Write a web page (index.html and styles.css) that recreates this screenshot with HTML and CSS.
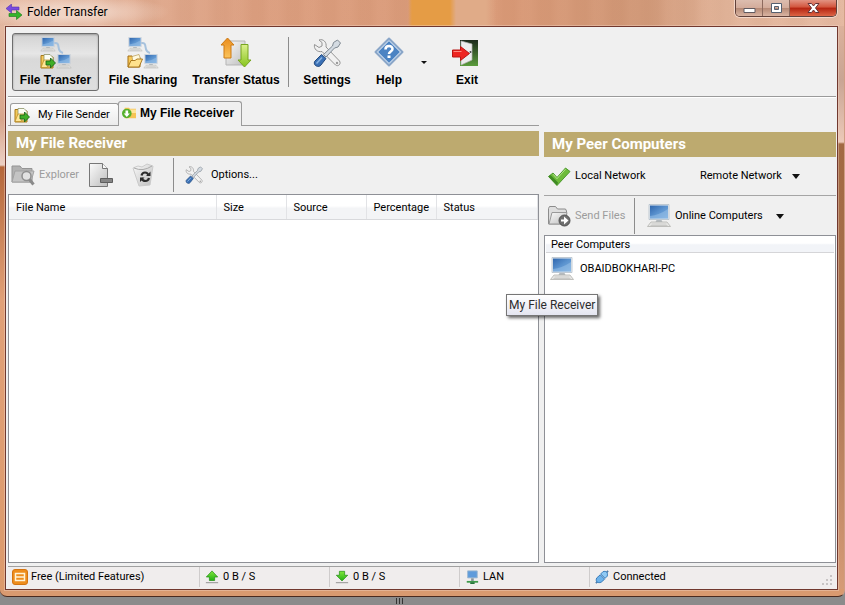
FILE: index.html
```html
<!DOCTYPE html>
<html lang="en">
<head>
<meta charset="utf-8">
<title>Folder Transfer</title>
<link rel="stylesheet" href="styles.css">
</head>
<body>
<svg class="defs" width="0" height="0" aria-hidden="true">
  <defs>
    <linearGradient id="g-screen" x1="0" y1="0" x2="1" y2="1"><stop offset="0" stop-color="#2f66ad"/><stop offset=".5" stop-color="#5b93cf"/><stop offset="1" stop-color="#7fb0e0"/></linearGradient>
    <linearGradient id="g-green" x1="0" y1="0" x2="0" y2="1"><stop offset="0" stop-color="#7fe63c"/><stop offset="1" stop-color="#23b012"/></linearGradient>
    <linearGradient id="g-lime" x1="0" y1="0" x2="0" y2="1"><stop offset="0" stop-color="#dcf08e"/><stop offset="1" stop-color="#86c41c"/></linearGradient>
    <linearGradient id="g-orange" x1="0" y1="0" x2="0" y2="1"><stop offset="0" stop-color="#ea8c1c"/><stop offset="1" stop-color="#fbc45c"/></linearGradient>
    <linearGradient id="g-grey" x1="0" y1="0" x2="1" y2="1"><stop offset="0" stop-color="#fbfbfb"/><stop offset="1" stop-color="#bdbdbd"/></linearGradient>
    <linearGradient id="g-door" x1="0" y1="0" x2="0" y2="1"><stop offset="0" stop-color="#1c2a1c"/><stop offset="1" stop-color="#5b9c3c"/></linearGradient>
    <symbol id="pc" viewBox="0 0 24 24">
      <path d="M2 .5h20v15H2z" fill="#e6ebf0" stroke="#b3bfca" stroke-width=".8"/>
      <path d="M3 1.500h18v13H3z" fill="url(#g-screen)"/>
      <path d="M3 12Q12 11 21 5v9.500H3z" fill="#9cc4ea" opacity=".5"/>
      <path d="M9.500 16h5l1 2h-7z" fill="#b4babf"/>
      <path d="M4 18h16l3.500 4.500H.5z" fill="#e8e8e6" stroke="#b2b2af" stroke-width=".8"/>
      <path d="M4.500 20h15M3.500 21.500h17" stroke="#bdbdba" stroke-width=".7"/>
    </symbol>
    <symbol id="send" viewBox="0 0 16 16">
      <path d="M1 2.500h4l1 1.500h7v11H1z" fill="#f5c95a" stroke="#a87a18"/>
      <path d="M4 1.500h6l3 3V13H4z" fill="#fbfdf4" stroke="#8d9468" stroke-width=".8"/>
      <path d="M1 14.500L4 7h6l-3 7.500z" fill="#ffe695" stroke="#b98a22" stroke-width=".7"/>
      <path d="M6 8h4.500V5l5 5-5 5v-3H6z" fill="#3fae27" stroke="#155f11" stroke-width=".8"/>
    </symbol>
    <symbol id="folder" viewBox="0 0 16 16">
      <path d="M1 3h4l1.500 1.500H13V14H1z" fill="#f8c957" stroke="#a36f14"/>
      <path d="M5 3.500l7-2 2 6-8 2z" fill="#fff9df" stroke="#b89a50" stroke-width=".7"/>
      <path d="M1 14l3-6.500h4L10 6h5.500L12 14z" fill="#ffe28c" stroke="#a36f14" stroke-width=".9"/>
    </symbol>
    <symbol id="tools" viewBox="0 0 32 32">
      <path d="M3.500 7.500l4.500 3 3-1.500V5.500L8 3c4-1.500 8 2 7 7L28.500 24c2 3-1.500 6-4 4L11 14.500C6.500 15.500 2.500 12 3.500 7.500z" fill="#f1f1f1" stroke="#949494"/>
      <circle cx="26" cy="26" r="1.200" fill="#9a9a9a"/>
      <path d="M21.500 9l1-3.500L26.500 3l3 3-2.500 4-3.500 1-8.500 9-2.500-2.500z" fill="#d4dbe2" stroke="#7f8992"/>
      <path d="M10.500 17.500l4.500 4-5 6.500c-2 3-8 1-6.500-3.500z" fill="#3a70b5" stroke="#244a7d"/>
      <path d="M11 20.500l-5.500 6" stroke="#8ab4e2" stroke-width="1.500"/>
    </symbol>
    <symbol id="up" viewBox="0 0 16 16"><path d="M8 1l6.500 7H11v4H5V8H1.500z" fill="url(#g-green)" stroke="#218c14" stroke-width=".8"/><path d="M1 14.500h14" stroke="#868686"/></symbol>
    <symbol id="down" viewBox="0 0 16 16"><path d="M8 12.500L14.500 6H11V1.500H5V6H1.500z" fill="url(#g-green)" stroke="#218c14" stroke-width=".8"/><path d="M1 14.500h14" stroke="#868686"/></symbol>
  </defs>
</svg>

<div class="window">
  <header class="titlebar">
    <svg class="i16" viewBox="0 0 16 16" aria-hidden="true"><path d="M0 4.500L5.500 0v3H13v3H5.500v3z" fill="#7a4be0" stroke="#5632ad" stroke-width=".6"/><path d="M16 11l-5.500-4.500v3H3v3h7.500v3z" fill="#35b52a" stroke="#16771a" stroke-width=".6"/></svg>
    <h1>Folder Transfer</h1>
    <div class="caption">
      <button type="button" class="cap" aria-label="Minimize"><svg width="13" height="12" viewBox="0 0 13 12"><path d="M1 6.500h11v4H1z" fill="#fff" stroke="#605a60"/></svg></button>
      <button type="button" class="cap" aria-label="Maximize"><svg width="13" height="12" viewBox="0 0 13 12"><path d="M1.500 1.500h10v9h-10zM4.500 4.500v3h4v-3z" fill="#fff" fill-rule="evenodd" stroke="#56606f"/></svg></button>
      <button type="button" class="cap close" aria-label="Close"><svg width="13" height="12" viewBox="0 0 13 12"><path d="M1 1.500h3.500l2 2.500 2-2.500H12L8.500 6l3.500 4.500H8.500l-2-2.500-2 2.500H1L4.500 6z" fill="#fff" stroke="#643237"/></svg></button>
    </div>
  </header>

  <main class="client">
    <nav class="toolbar" aria-label="Main">
      <button type="button" class="tool pressed">
        <svg class="i32" viewBox="0 0 32 32" aria-hidden="true"><path d="M14 6c8-1 1 8 9 10" fill="none" stroke="#a7c2dd" stroke-width="2"/><use href="#pc" width="16" height="15"/><use href="#pc" x="16" y="17" width="16" height="15"/><use href="#send" x="0" y="16" width="16" height="16"/></svg>
        <span>File Transfer</span></button>
      <button type="button" class="tool">
        <svg class="i32" viewBox="0 0 32 32" aria-hidden="true"><path d="M14 6c8-1 1 8 9 10" fill="none" stroke="#a7c2dd" stroke-width="2"/><use href="#pc" width="16" height="15"/><use href="#pc" x="16" y="17" width="16" height="15"/><use href="#folder" x="0" y="16" width="16" height="16"/></svg>
        <span>File Sharing</span></button>
      <button type="button" class="tool wide">
        <svg class="i32" viewBox="0 0 32 32" aria-hidden="true"><path d="M6 4h19v24H6z" fill="url(#g-grey)" stroke="#b5b5b5"/><path d="M7.500 1l6.500 7h-3v13h-7V8H1z" fill="url(#g-orange)" stroke="#cd7a14"/><path d="M24.500 30L18 23h3V7.500h7V23h3z" fill="url(#g-lime)" stroke="#76a51f"/></svg>
        <span>Transfer Status</span></button>
      <span class="sep"></span>
      <button type="button" class="tool mid"><svg class="i32" viewBox="0 0 32 32" aria-hidden="true"><use href="#tools" width="32" height="32"/></svg><span>Settings</span></button>
      <button type="button" class="tool slim">
        <svg class="i32" viewBox="0 0 32 32" aria-hidden="true"><path d="M16 1.500L29.500 15 16 28.500 2.500 15z" fill="#4b83c3" stroke="#8aa6c8" stroke-width="2" stroke-linejoin="round"/><path d="M16 3.500L27.500 15 16 26.500 4.500 15z" fill="none" stroke="#fff"/><path d="M12.500 12.500c0-4.500 7-4.500 7-.5 0 2.500-3.500 2.500-3.500 5" fill="none" stroke="#fff" stroke-width="2.600"/><path d="M14.500 18.500h3v2.500h-3z" fill="#fff"/></svg>
        <span>Help</span></button>
      <button type="button" class="more" aria-label="More help"><i class="caret small"></i></button>
      <button type="button" class="tool mid">
        <svg class="i32" viewBox="0 0 32 32" aria-hidden="true"><path d="M9 3h18v26H9z" fill="url(#g-door)"/><path d="M10 4l11 3v16l-11 5z" fill="#ececec" stroke="#b2b2b2" stroke-width=".7"/><circle cx="19.500" cy="15" r="1" fill="#444"/><path d="M1.500 13h8V9.500l9 7-9 7V20h-8z" fill="#ee2420" stroke="#b81512"/><path d="M2.500 14.500h8" stroke="#ff8a80"/></svg>
        <span>Exit</span></button>
    </nav>

    <div class="panes">
      <section class="left">
        <div class="tabs" role="tablist">
          <button type="button" class="tab" role="tab" aria-selected="false"><svg class="i16" aria-hidden="true"><use href="#send"/></svg>My File Sender</button>
          <button type="button" class="tab active" role="tab" aria-selected="true"><svg class="i14" viewBox="0 0 16 16" aria-hidden="true"><path d="M3 2h5l1 1h7v11H3z" fill="#f6c455"/><path d="M4 4h12v4H4z" fill="#ffe59a"/><circle cx="5.500" cy="8.500" r="5.500" fill="#56b02c"/><path d="M4 5h3v3.500h2l-3.500 4L2 8.500h2z" fill="#fff"/></svg>My File Receiver</button>
        </div>
        <h2>My File Receiver</h2>
        <div class="bar">
          <button type="button" class="act" disabled><svg class="i24" viewBox="0 0 24 24" aria-hidden="true"><path d="M1 3h8l2 2.500h10V19H1z" fill="#b2b2b2" stroke="#949494"/><path d="M4 8h19l-3 11H1z" fill="#c4c4c4" stroke="#a2a2a2"/><circle cx="15.500" cy="13" r="4.500" fill="#e2e2e2" stroke="#8f8f8f" stroke-width="1.500"/><path d="M18.500 16.500l4 5" stroke="#8a8a8a" stroke-width="3"/></svg>Explorer</button>
          <button type="button" class="act icon" aria-label="Remove"><svg class="i24" viewBox="0 0 24 24" aria-hidden="true"><path d="M.5.500h13l5 5v18H.5z" fill="url(#g-grey)" stroke="#777"/><path d="M13.500.500v5h5" fill="#f8f8f8" stroke="#777"/><path d="M11.500 15.500h12v4h-12z" fill="#858585" stroke="#5e5e5e"/></svg></button>
          <button type="button" class="act icon" aria-label="Clear"><svg class="i24" viewBox="0 0 24 24" aria-hidden="true"><path d="M2 5l5-2 4 1 5-3 6 2-3 19-11 1z" fill="url(#g-grey)" stroke="#cbcbcb"/><path d="M3 5q9 4 18-2" fill="none" stroke="#a9a9a9"/><path d="M10.500 12.500c1-4 6-4 7 0M18 15c-1 4-6 4-7.500 0" fill="none" stroke="#2d2d2d" stroke-width="2.200"/><path d="M19.500 8.500v4.500H15zM9 19V14.500h4.500z" fill="#2d2d2d"/></svg></button>
          <span class="sep"></span>
          <button type="button" class="act"><svg class="i20" aria-hidden="true"><use href="#tools"/></svg>Options...</button>
        </div>
        <div class="sheet">
          <table>
            <colgroup><col class="c-name"><col class="c-size"><col class="c-source"><col class="c-size"><col></colgroup>
            <thead><tr><th scope="col">File Name</th><th scope="col">Size</th><th scope="col">Source</th><th scope="col">Percentage</th><th scope="col">Status</th></tr></thead>
          </table>
        </div>
      </section>

      <section class="right">
        <h2>My Peer Computers</h2>
        <div class="bar network">
          <button type="button" class="act local"><svg class="i24" viewBox="0 0 24 24" aria-hidden="true"><path d="M1.500 12.500L6 9l4 4.500L18.500 4 23 7.500 10 21.500z" fill="#6dbb3a" stroke="#4c9a2c"/><path d="M1.500 12.500l8.500 9 1-3-7.500-7.500z" fill="#3f8a24"/><path d="M6 10.200l4 4.500 8.500-9.500" fill="none" stroke="#b4e48c"/></svg>Local Network</button>
          <button type="button" class="act remote">Remote Network<i class="caret"></i></button>
        </div>
        <div class="bar">
          <button type="button" class="act send" disabled><svg class="i24" viewBox="0 0 24 24" aria-hidden="true"><path d="M1.500 20V4.500l1-2h6l2 2.500h8l1 2V20z" fill="#dedede" stroke="#8c8c8c"/><path d="M2 20L5 8.500h15L18 20z" fill="url(#g-grey)" stroke="#999"/><circle cx="17.500" cy="16.500" r="5.500" fill="#6f6f6f" stroke="#4f4f4f"/><path d="M14 15.500h3v-3l4.500 4-4.500 4v-3h-3z" fill="#fff"/></svg>Send Files</button>
          <span class="sep"></span>
          <button type="button" class="act online"><svg class="i24" aria-hidden="true"><use href="#pc"/></svg>Online Computers<i class="caret"></i></button>
        </div>
        <div class="sheet peers">
          <h3>Peer Computers</h3>
          <ul><li><svg class="i24" aria-hidden="true"><use href="#pc"/></svg>OBAIDBOKHARI-PC</li></ul>
          <div class="tip" role="tooltip">My File Receiver</div>
        </div>
      </section>
    </div>

    <footer class="status">
      <span class="cell first"><svg class="i16" viewBox="0 0 16 16" aria-hidden="true"><rect x=".5" y=".5" width="15" height="15" rx="2.500" fill="#ee8d1c" stroke="#d47410"/><path d="M3.500 4.500h9v7h-9zM3.500 8h9" fill="none" stroke="#fff3d6" stroke-width="1.500"/></svg>Free (Limited Features)</span>
      <span class="cell"><svg class="i14" aria-hidden="true"><use href="#up"/></svg>0 B / S</span>
      <span class="cell"><svg class="i14" aria-hidden="true"><use href="#down"/></svg>0 B / S</span>
      <span class="cell"><svg class="i14" viewBox="0 0 16 16" aria-hidden="true"><path d="M3 1h11v8H3z" fill="#5f9bdb" stroke="#9db7d0"/><path d="M7 9.500h3V13H7z" fill="#8a949c"/><path d="M2 13.500h13" stroke="#3d9a4a" stroke-width="2"/><path d="M6 15h5" stroke="#26753a" stroke-width="2"/></svg>LAN</span>
      <span class="cell last"><svg class="i14" viewBox="0 0 16 16" aria-hidden="true"><path d="M1 15l3-3M12 4l3-3" stroke="#4e7aa8" stroke-width="2"/><path d="M2 9l4-3.500 5 5-4 3.500c-4 1.500-7-1-5-5z" fill="#6db2ea" stroke="#2c72b4"/><path d="M6.500 4.500L9 2c4-1.500 6 1 5 5l-2.500 2.500z" fill="#8fc9f4" stroke="#2c72b4"/></svg>Connected<svg class="grip" viewBox="0 0 12 12" aria-hidden="true"><path d="M8 1h2v2H8zM4 5h2v2H4zM8 5h2v2H8zM0 9h2v2H0zM4 9h2v2H4zM8 9h2v2H8z" fill="#c8c4c4"/></svg></span>
    </footer>
  </main>
</div>
<div class="desk"><i></i><i></i><i></i></div>
</body>
</html>
```
FILE: styles.css
```css
* { box-sizing: border-box; }

body {
  margin: 0;
  min-height: 100vh;
  display: flex;
  flex-direction: column;
  background: #8b8b8b;
  font: 11px/14px Roboto, "Liberation Sans", Arial, sans-serif;
  color: #000;
}

button {
  font: inherit;
  color: inherit;
  margin: 0;
  padding: 0;
  border: 0;
  background: none;
}

h1, h2, h3, ul { margin: 0; padding: 0; font: inherit; }
svg { display: block; flex: none; }
.defs { position: absolute; }
.i14 { width: 14px; height: 14px; }
.i16 { width: 16px; height: 16px; }
.i20 { width: 20px; height: 20px; }
.i24 { width: 24px; height: 24px; }
.i32 { width: 32px; height: 32px; }

.window {
  flex: 1;
  display: flex;
  flex-direction: column;
  padding: 0 6px 6px 5px;
  border-bottom: 1px solid #4a2b20;
  border-right: 1px solid #cf9e84;
  border-radius: 0 0 7px 7px;
  background:
    linear-gradient(#d99a70, #d99a70) bottom / 100% 7px no-repeat,
    linear-gradient(#e6bda6, #d8a58b 120px, #ecd0c4 165px, #b5673a 167px, #e0a078 300px, #dc9a6c) left / 6px 100% no-repeat,
    linear-gradient(#e5b79f, #c9a594 80px, #ecc9b8 142px, #a26942 144px, #a87350 360px, #d79c78) right / 6px 100% no-repeat,
    #d99c7c;
}

.titlebar {
  display: flex;
  align-items: flex-start;
  height: 26px;
  padding: 4px 0 0 6px;
  margin: 0 -6px 0 -5px;
  background:
    radial-gradient(ellipse 100px 18px at 70px 12px, #f4dccfcc 30%, #f4dccf00),
    linear-gradient(90deg, #e59c4500 408px, #e59c45 412px 450px, #e0ab88 456px 486px, #d9a17f00 496px),
    repeating-linear-gradient(90deg, #c58a6b22 0 10px, #e0aa8f22 18px 26px, #c58a6b22 36px),
    linear-gradient(90deg, #e6bca6, #dc9f80 30%, #d99976 60%, #cf9776 76%, #e3b79d 86%, #e7bea7);
}
.titlebar h1 {
  margin-left: 5px;
  font-size: 12px;
  line-height: 16px;
}
.caption {
  display: flex;
  margin: -4px 7px 0 auto;
  height: 17px;
  border: 1px solid #61413a;
  border-top: 0;
  border-radius: 0 0 5px 5px;
  overflow: hidden;
  box-shadow: 0 0 0 1px #f3d6c8;
}
.cap {
  display: grid;
  place-items: center;
  width: 27px;
  border-right: 1px solid #8d6a5e;
  background: linear-gradient(#dcbdaf, #d3ab9a 50%, #b68a76 52%, #d9b4a2);
}
.cap.close {
  width: 46px;
  border: 0;
  background: linear-gradient(#e29382, #d2543c 45%, #b42310 50%, #dd6545);
}

.client {
  flex: 1;
  display: flex;
  flex-direction: column;
  padding: 0 1px 0 2px;
  border: 1px solid #71382e;
  box-shadow: 0 0 0 1px #f6d9ca66;
  background: #f0f0f0;
}

.toolbar {
  display: flex;
  height: 70px;
  padding: 6px 4px 5px;
  border-bottom: 1px solid #9a9a9a;
  box-shadow: 0 1px #fff;
}
.tool {
  display: flex;
  flex-direction: column;
  align-items: center;
  gap: 4px;
  width: 88px;
  padding-top: 4px;
  border-radius: 3px;
  font: bold 12px/14px "Liberation Sans", Arial, sans-serif;
  white-space: nowrap;
}
.tool.pressed {
  width: 87px;
  border: 1px solid #6e6e6e;
  padding-top: 3px;
  background: linear-gradient(#d2d2d2, #e6e6e6 35%, #d9d9d9 45%, #dfdfdf);
  box-shadow: inset 0 1px 2px #9a9a9a;
}
.tool.wide { width: 98px; }
.tool.mid { width: 70px; }
.tool.slim { width: 54px; }
.sep { width: 1px; background: #8c8c8c; flex: none; }
.toolbar .sep { margin: 4px 3px; }
.more { width: 16px; }
.caret {
  display: block;
  width: 0;
  height: 0;
  border: 4px solid transparent;
  border-top: 5px solid #111;
  border-bottom: 0;
}
.caret.small { border-width: 3px 3px 0; margin: 1px auto 0; }

.panes {
  flex: 1;
  display: grid;
  grid-template-columns: minmax(0, 531fr) minmax(0, 292fr);
  gap: 5px;
}
.left, .right { display: flex; flex-direction: column; min-width: 0; }
.right { padding-top: 35px; }

.tabs {
  display: flex;
  align-items: flex-end;
  height: 29px;
  padding-left: 2px;
  margin-bottom: 5px;
  border-bottom: 1px solid #9b9b9b;
}
.tab {
  display: flex;
  align-items: center;
  gap: 8px;
  width: 109px;
  height: 22px;
  padding: 0 3px;
  border: 1px solid #9b9b9b;
  border-bottom: 0;
  border-radius: 3px 3px 0 0;
  background: linear-gradient(#fdfdfd, #ebebeb);
  white-space: nowrap;
}
.tab.active {
  gap: 4px;
  width: 124px;
  height: 25px;
  margin: 0 0 -1px -1px;
  padding-bottom: 2px;
  background: #f0f0f0;
  font: bold 12px/14px "Liberation Sans", Arial, sans-serif;
}

h2 {
  height: 25px;
  padding-left: 8px;
  background: #bdaa6f;
  color: #fff;
  font: bold 15px/25px Roboto, "Liberation Sans", Arial, sans-serif;
}

.bar {
  display: flex;
  height: 38px;
  padding: 0 3px;
}
.act {
  display: flex;
  align-items: center;
  gap: 4px;
  white-space: nowrap;
}
.act:disabled { color: #9c9c9c; }
.act.icon { margin-left: 10px; width: 32px; }
.left .sep { margin: 2px 10px; }
.left .sep + .act { gap: 7px; }
.network { height: 39px; border-bottom: 1px solid #a5a5a5; }
.network .local { width: 97px; }
.right .bar + .bar { height: 39px; padding-top: 1px; }
.act.send { width: 78px; }
.act.remote { margin-left: 56px; }
.act .caret { margin-left: 6px; }
.act.online .caret { margin-left: 9px; }
.right .sep { margin: 1px 12px 1px 9px; }

.sheet {
  flex: 1;
  border: 1px solid #8e9096;
  background: #fff;
}
table {
  width: 100%;
  table-layout: fixed;
  border-collapse: collapse;
}
.c-name { width: 207px; }
.c-size { width: 70px; }
.c-source { width: 80px; }
th {
  height: 24px;
  padding: 2px 0 0 7px;
  border-right: 1px solid #e2e3e6;
  border-bottom: 1px solid #d8d9dc;
  background: linear-gradient(#fff 45%, #f3f4f6 55%);
  font-weight: normal;
  text-align: left;
}

.peers { position: relative; }
.peers h3 {
  height: 17px;
  margin: 0 1px;
  padding: 2px 0 0 5px;
  border-bottom: 1px solid #d5d5d8;
  background: linear-gradient(#fff 45%, #f2f4f8 55%);
}
.peers ul { list-style: none; padding: 3px 5px; }
.peers li { display: flex; align-items: center; gap: 6px; height: 26px; }
.tip {
  position: absolute;
  top: 58px;
  left: -39px;
  padding: 2px;
  border: 1px solid #767676;
  background: linear-gradient(#fff, #e4e5f0);
  box-shadow: 2px 2px 3px #0009;
  font-size: 12px;
  line-height: 16px;
  color: #2c2c2c;
  white-space: nowrap;
}

.status {
  display: flex;
  height: 23px;
  margin-top: 3px;
  border-top: 1px solid #a0a0a0;
  background: #f0eded;
}
.cell {
  display: flex;
  align-items: center;
  gap: 4px;
  width: 130px;
  margin: 0 0 2px;
  padding-left: 5px;
  border-left: 1px solid #cfcccc;
  white-space: nowrap;
}
.cell.first { width: 191px; padding-left: 4px; border: 0; gap: 3px; }
.cell.last { flex: 1; }
.grip { width: 12px; height: 12px; margin: 6px 2px 0 auto; }

.desk {
  display: flex;
  justify-content: center;
  gap: 2px;
  height: 8px;
  margin-right: 46px;
  padding-top: 1px;
}
.desk i { width: 1px; height: 6px; background: #333; }
```
